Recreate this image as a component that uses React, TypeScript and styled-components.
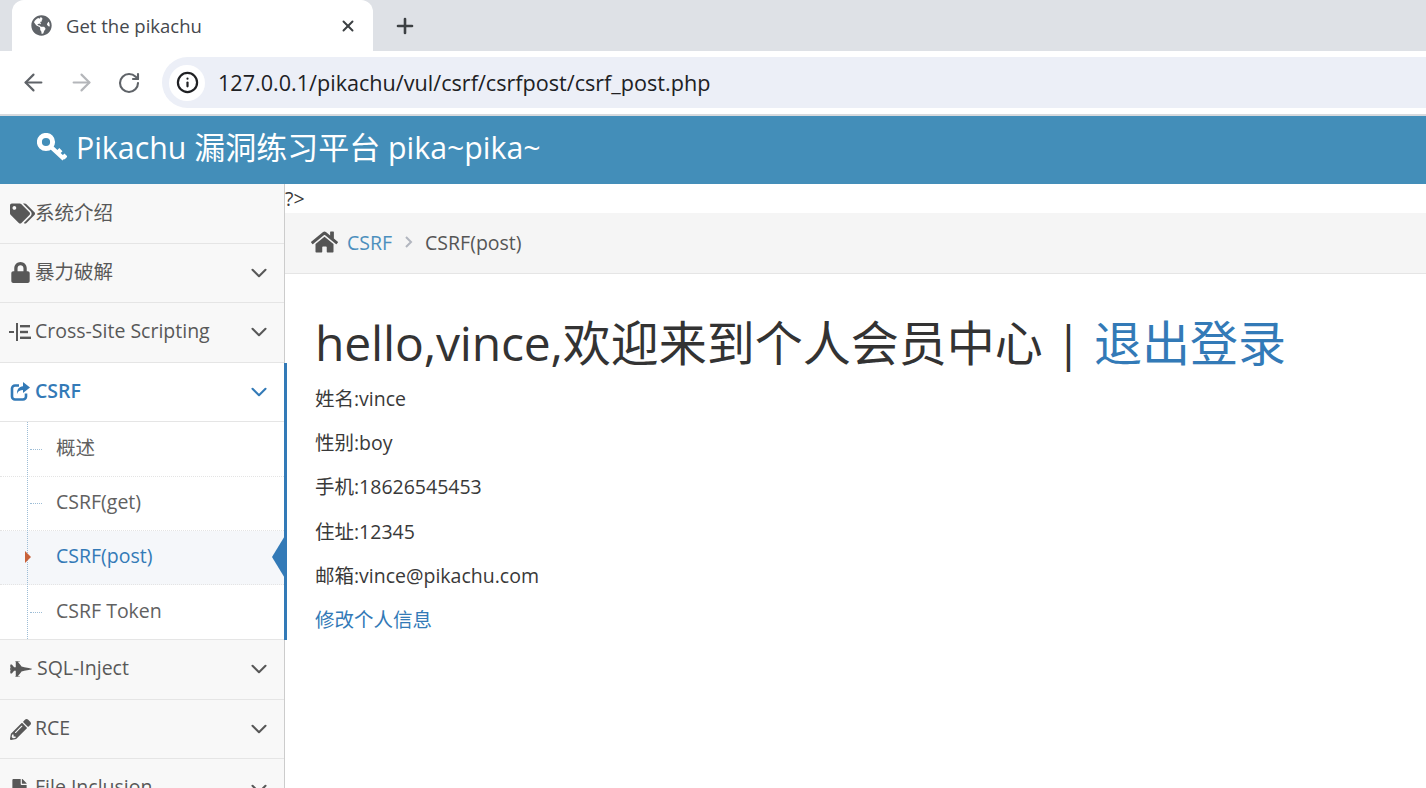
import React from "react";
import styled, { createGlobalStyle } from "styled-components";
import { ArrowLeft, ArrowRight, RotateCw, X, Plus, Info, ChevronDown } from "lucide-react";
import { FaGlobeAmericas, FaTags, FaLock, FaFighterJet, FaPencilAlt, FaFile, FaHome } from "react-icons/fa";

const Global = createGlobalStyle`
  html, body { margin: 0; padding: 0; height: 100%; overflow: hidden; background: #fff; }
  body { font-family: "Open Sans", "Noto Sans CJK SC", sans-serif; font-size: 19.5px; color: #393939; }
  * { box-sizing: border-box; }
`;

const Page = styled.div`
  width: 1426px;
  height: 788px;
  overflow: hidden;
  display: flex;
  flex-direction: column;
`;
const TabStrip = styled.div`
  height: 51px;
  background: #dee1e6;
  display: flex;
  align-items: flex-end;
  padding-left: 12px;
  flex: none;
`;
const Tab = styled.div`
  width: 361px;
  height: 51px;
  background: #fff;
  border-radius: 12px 12px 0 0;
  display: flex;
  align-items: center;
  padding: 0 16px 0 19px;
  color: #45484d;
  font-size: 18.5px;
  font-family: "Open Sans", sans-serif;
`;
const TabTitle = styled.span`
  flex: 1;
  margin-left: 14px;
  padding-bottom: 1px;
`;
const NewTab = styled.div`
  margin: 0 0 0 20px;
  height: 51px;
  display: flex;
  align-items: center;
  color: #3c4043;
`;
const Toolbar = styled.div`
  height: 65px;
  flex: none;
  background: #fff;
  border-bottom: 2px solid #d7dade;
  display: flex;
  align-items: center;
  padding: 0 0 0 18px;
`;
const NavBtn = styled.div<{ $muted?: boolean }>`
  width: 30px;
  height: 30px;
  margin-right: 18px;
  display: flex;
  align-items: center;
  justify-content: center;
  color: ${(p) => (p.$muted ? "#b4b6ba" : "#5f6368")};
`;
const AddressBar = styled.div`
  flex: 1;
  height: 51px;
  background: #eceff7;
  border-radius: 26px 0 0 26px;
  display: flex;
  align-items: center;
  padding-left: 7px;
`;
const InfoBadge = styled.div`
  width: 36px;
  height: 36px;
  border-radius: 50%;
  background: #fff;
  display: flex;
  align-items: center;
  justify-content: center;
  color: #1f2023;
`;
const Url = styled.span`
  margin-left: 13px;
  font-size: 21.6px;
  color: #202124;
  padding-bottom: 1px;
`;
const Navbar = styled.div`
  height: 68px;
  flex: none;
  background: #438eb9;
  color: #fff;
  display: flex;
  align-items: center;
  padding: 0 0 9px 37px;
  font-size: 30.3px;
`;
const BrandText = styled.span`
  white-space: pre;
`;
const BrandCjk = styled.span`
  font-size: 31px;
`;
const BrandIcon = styled.svg`
  width: 30px;
  height: 30px;
  margin: 4px 9px 0 0;
  fill: none;
  stroke: #fff;
`;
const Body = styled.div`
  flex: 1;
  display: flex;
  min-height: 0;
`;
const Sidebar = styled.div`
  width: 285px;
  flex: none;
  background: #f2f2f2;
  border-right: 1px solid #ccc;
  overflow: visible;
`;
const MenuItem = styled.div<{ $open?: boolean }>`
  height: 59.6px;
  padding: 0 12px 0 10px;
  display: flex;
  align-items: center;
  background: ${(p) => (p.$open ? "#fff" : "#f8f8f8")};
  color: ${(p) => (p.$open ? "#337ab7" : "#585858")};
  font-weight: ${(p) => (p.$open ? 600 : 400)};
  border-bottom: 1.5px solid #e5e5e5;
  position: relative;
`;
const MenuIcon = styled.span<{ $w?: number }>`
  width: ${(p) => p.$w ?? 25}px;
  flex: none;
  display: flex;
  align-items: center;
`;
const MenuLabel = styled.span`
  flex: 1;
  white-space: nowrap;
  padding-bottom: 4px;
`;
const OpenGroup = styled.div`
  position: relative;
  margin-right: -3px;
  border-right: 3px solid #337ab7;
  background: #fff;
`;
const Submenu = styled.div`
  position: relative;
  border-bottom: 1.5px solid #e5e5e5;
  &::before {
    content: "";
    position: absolute;
    left: 27px;
    top: 0;
    bottom: 0;
    border-left: 1px dotted #9dbdd6;
    z-index: 1;
  }
`;
const SubItem = styled.div<{ $active?: boolean; $last?: boolean }>`
  height: 54.2px;
  padding: 0 0 4px 56px;
  display: flex;
  align-items: center;
  position: relative;
  background: ${(p) => (p.$active ? "#f5f7fa" : "#fff")};
  color: ${(p) => (p.$active ? "#337ab7" : "#616161")};
  border-bottom: ${(p) => (p.$last ? "none" : "1px dotted #e4e4e4")};
  &::before {
    content: "";
    position: absolute;
    left: 30px;
    top: 50%;
    width: 12px;
    border-top: 1px dotted #9dbdd6;
    display: ${(p) => (p.$active ? "none" : "block")};
  }
`;
const SubCaret = styled.span`
  position: absolute;
  left: 25px;
  top: 50%;
  margin-top: -6px;
  border-left: 6px solid #c86139;
  border-top: 6px solid transparent;
  border-bottom: 6px solid transparent;
  z-index: 2;
`;
const ActiveArrow = styled.span`
  position: absolute;
  right: -2px;
  top: 50%;
  margin-top: -23px;
  border-right: 14px solid #337ab7;
  border-top: 23px solid transparent;
  border-bottom: 23px solid transparent;
`;
const Chevron = styled(ChevronDown)`
  flex: none;
`;
const Main = styled.div`
  flex: 1;
  min-width: 0;
  color: #393939;
`;
const PhpTail = styled.div`
  height: 29px;
  line-height: 29px;
  color: #393939;
`;
const Breadcrumbs = styled.div`
  height: 61px;
  background: #f5f5f5;
  border-bottom: 1.5px solid #e5e5e5;
  display: flex;
  align-items: center;
  padding: 0 0 2px 26px;
  color: #555;
`;
const HomeIcon = styled(FaHome)`
  width: 27px;
  height: 24px;
  color: #555;
  margin-right: 9px;
`;
const CrumbLink = styled.a`
  color: #4c8fbd;
`;
const CrumbSep = styled.span`
  margin: 0 11px 0 12px;
  display: flex;
  color: #b2b6bf;
`;
const Content = styled.div`
  padding: 36px 0 0 30px;
`;
const Title = styled.h1`
  margin: 0 0 4px;
  font-size: 48px;
  font-weight: 400;
  line-height: 66px;
  color: #333;
  white-space: nowrap;
`;
const TitleLatin = styled.span`
  letter-spacing: -0.17px;
`;
const TitleLink = styled.a`
  color: #337ab7;
`;
const Field = styled.p`
  margin: 0;
  height: 44.2px;
  line-height: 38px;
  color: #393939;
`;
const EditLink = styled.a`
  color: #337ab7;
  display: block;
  line-height: 38px;
`;

function ListIcon() {
  return (
    <svg width="22" height="22" viewBox="0 0 22 22" fill="#585858" style={{ marginLeft: -1 }}>
      <rect x="0" y="10" width="5" height="2" />
      <rect x="7" y="2" width="2" height="18" />
      <rect x="11" y="4" width="10" height="2.4" />
      <rect x="11" y="9.8" width="8" height="2.4" />
      <rect x="11" y="15.6" width="11" height="2.4" />
    </svg>
  );
}

function ShareIcon() {
  return (
    <svg width="20" height="20" viewBox="0 0 20 20">
      <path
        d="M9 3.5H5A3 3 0 0 0 2 6.5v8a3 3 0 0 0 3 3h8a3 3 0 0 0 3-3v-3"
        fill="none"
        stroke="#337ab7"
        strokeWidth="2.6"
      />
      <path d="M13 0l7 5.5-7 5.5V8c-3 0-5 1-6 4-.3-4.5 2-7.5 6-7.8z" fill="#337ab7" />
    </svg>
  );
}

const chev = <Chevron size={26} strokeWidth={1.9} />;

export default function App() {
  return (
    <Page>
      <Global />
      <TabStrip>
        <Tab>
          <FaGlobeAmericas size={21} color="#5f6368" />
          <TabTitle>Get the pikachu</TabTitle>
          <X size={18} strokeWidth={2.6} color="#3c4043" />
        </Tab>
        <NewTab>
          <Plus size={24} strokeWidth={2.6} />
        </NewTab>
      </TabStrip>
      <Toolbar>
        <NavBtn><ArrowLeft size={27} strokeWidth={1.9} /></NavBtn>
        <NavBtn $muted><ArrowRight size={27} strokeWidth={1.9} /></NavBtn>
        <NavBtn><RotateCw size={24} strokeWidth={2.1} /></NavBtn>
        <AddressBar>
          <InfoBadge><Info size={23} strokeWidth={2.3} /></InfoBadge>
          <Url>127.0.0.1/pikachu/vul/csrf/csrfpost/csrf_post.php</Url>
        </AddressBar>
      </Toolbar>
      <Navbar>
        <BrandIcon viewBox="0 0 30 30">
          <circle cx="9" cy="9" r="6.6" strokeWidth="5" />
          <path d="M13.5 13.5L27 26M20.5 20l3.4-3.4M26 25l3-3" strokeWidth="4.4" />
        </BrandIcon>
        <BrandText>Pikachu <BrandCjk>漏洞练习平台</BrandCjk> pika~pika~</BrandText>
      </Navbar>
      <Body>
        <Sidebar>
          <MenuItem>
            <MenuIcon><FaTags size={25} /></MenuIcon>
            <MenuLabel>系统介绍</MenuLabel>
          </MenuItem>
          <MenuItem>
            <MenuIcon><FaLock size={21} /></MenuIcon>
            <MenuLabel>暴力破解</MenuLabel>
            {chev}
          </MenuItem>
          <MenuItem>
            <MenuIcon><ListIcon /></MenuIcon>
            <MenuLabel>Cross-Site Scripting</MenuLabel>
            {chev}
          </MenuItem>
          <OpenGroup>
            <MenuItem $open>
              <MenuIcon><ShareIcon /></MenuIcon>
              <MenuLabel>CSRF</MenuLabel>
              {chev}
            </MenuItem>
            <Submenu>
              <SubItem>概述</SubItem>
              <SubItem>CSRF(get)</SubItem>
              <SubItem $active>
                <SubCaret />
                CSRF(post)
                <ActiveArrow />
              </SubItem>
              <SubItem $last>CSRF Token</SubItem>
            </Submenu>
          </OpenGroup>
          <MenuItem>
            <MenuIcon $w={27}><FaFighterJet size={22} /></MenuIcon>
            <MenuLabel>SQL-Inject</MenuLabel>
            {chev}
          </MenuItem>
          <MenuItem>
            <MenuIcon><FaPencilAlt size={21} /></MenuIcon>
            <MenuLabel>RCE</MenuLabel>
            {chev}
          </MenuItem>
          <MenuItem>
            <MenuIcon><FaFile size={19} /></MenuIcon>
            <MenuLabel>File Inclusion</MenuLabel>
            {chev}
          </MenuItem>
        </Sidebar>
        <Main>
          <PhpTail>?&gt;</PhpTail>
          <Breadcrumbs>
            <HomeIcon />
            <CrumbLink>CSRF</CrumbLink>
            <CrumbSep><svg width="10" height="14" viewBox="0 0 10 14"><path d="M2 2l5 5-5 5" fill="none" stroke="currentColor" strokeWidth="2" /></svg></CrumbSep>
            CSRF(post)
          </Breadcrumbs>
          <Content>
            <Title><TitleLatin>hello,vince,</TitleLatin>欢迎来到个人会员中心 | <TitleLink>退出登录</TitleLink></Title>
            <Field>姓名:vince</Field>
            <Field>性别:boy</Field>
            <Field>手机:18626545453</Field>
            <Field>住址:12345</Field>
            <Field>邮箱:vince@pikachu.com</Field>
            <EditLink>修改个人信息</EditLink>
          </Content>
        </Main>
      </Body>
    </Page>
  );
}
